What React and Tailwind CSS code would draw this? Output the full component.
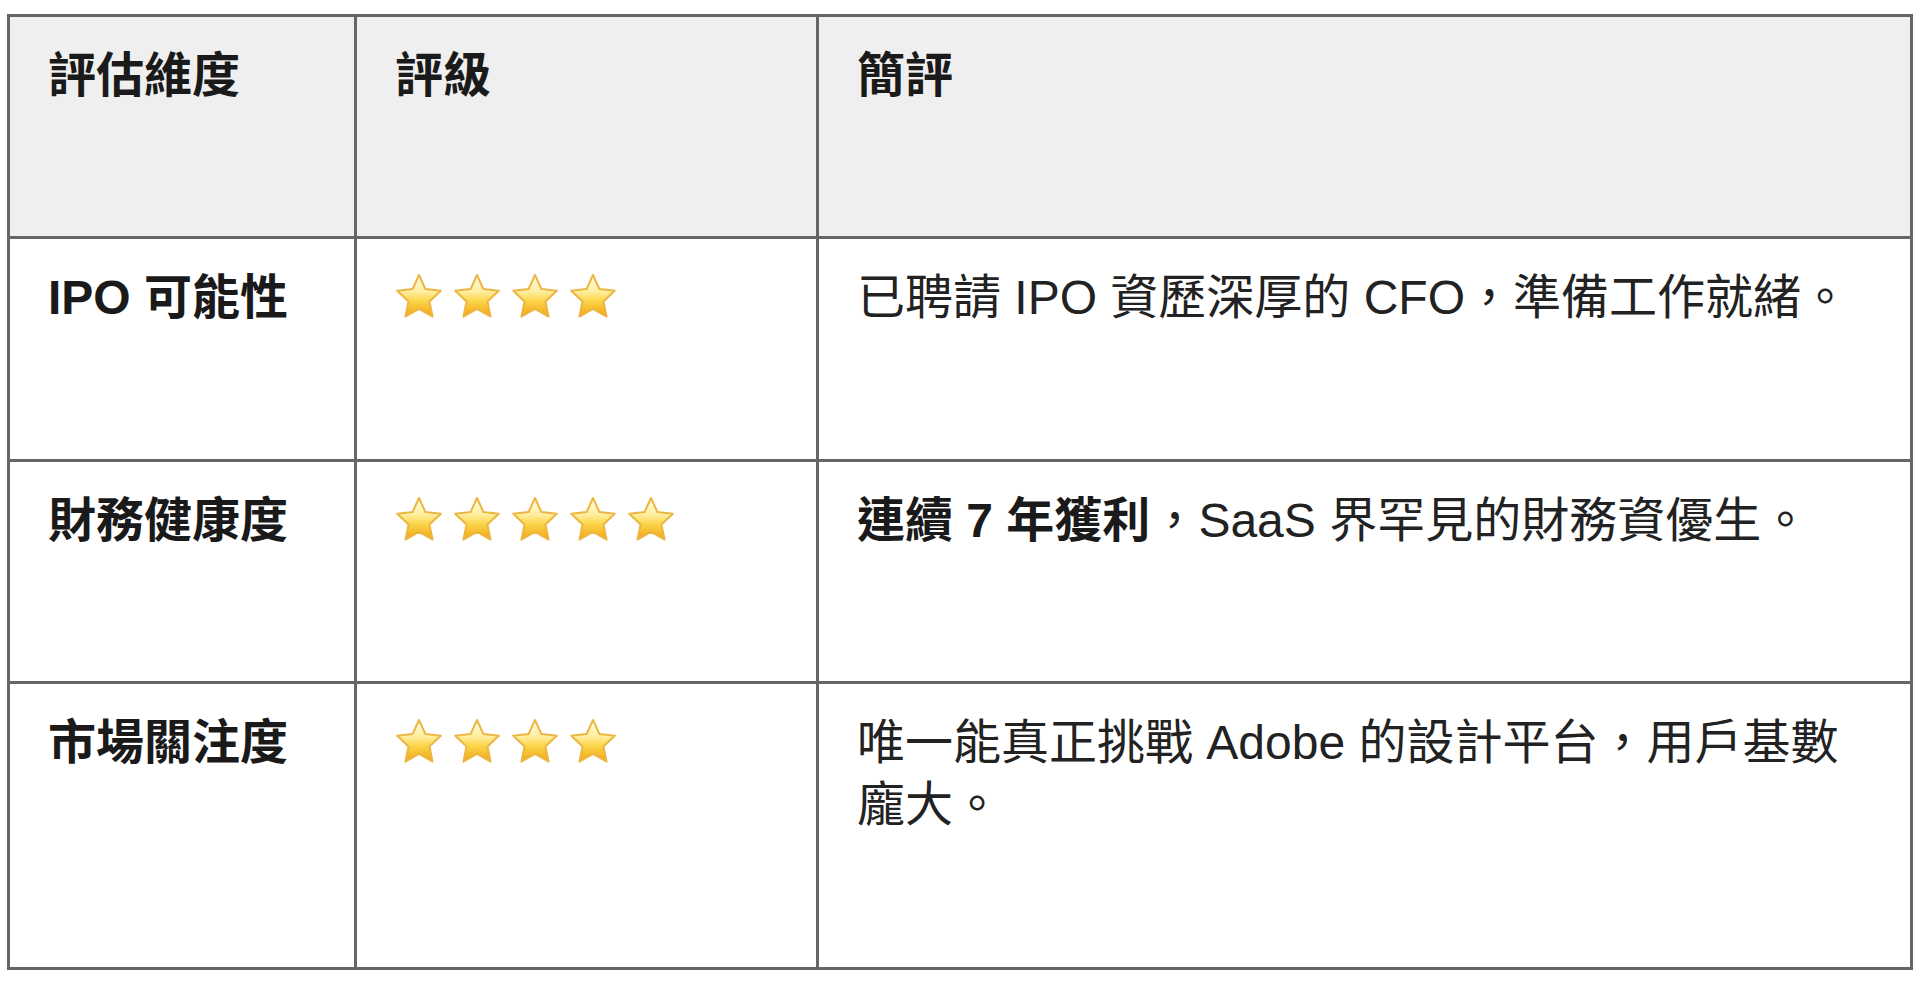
import React from "react";

function Star() {
  return (
    <svg width="48" height="46" viewBox="0 0 48 46" className="block shrink-0">
      <defs>
        <linearGradient id="sg" x1="0" y1="0" x2="0" y2="1">
          <stop offset="0%" stopColor="#fffbe6" />
          <stop offset="40%" stopColor="#ffeea0" />
          <stop offset="62%" stopColor="#fbd54a" />
          <stop offset="100%" stopColor="#f2a516" />
        </linearGradient>
      </defs>
      <path
        d="M24 2 L30.47 16.1 L45.8 17.8 L34.46 28.4 L37.6 43.6 L24 36 L10.4 43.6 L13.54 28.4 L2.2 17.8 L17.53 16.1 Z"
        fill="url(#sg)"
        stroke="#ecb642"
        strokeWidth="2"
        strokeLinejoin="round"
      />
    </svg>
  );
}

function Stars({ n }) {
  const arr = Array.from({ length: n });
  return (
    <div className="flex gap-[10px] pt-[6px]">
      {arr.map((_, i) => (
        <Star key={i} />
      ))}
    </div>
  );
}

const cell =
  "border-b-[3px] border-r-[3px] border-[#666666] pl-[38px] pr-[40px] pt-[28px]";
const cellLastCol = "border-b-[3px] border-[#666666] pl-[38px] pr-[40px] pt-[28px]";

export default function App() {
  return (
    <div className="min-h-[986px] w-full bg-white pl-[7px] pt-[14px] font-['Liberation_Sans','Noto_Sans_CJK_TC',sans-serif] text-[48px] leading-[62px] text-[#222222]">
      <div className="grid w-[1906px] grid-cols-[347px_462px_1091px] grid-rows-[222px_223px_222px_283px] border-[3px] border-[#666666]">
        {/* header */}
        <div className={`${cell} bg-[#efefef] font-bold text-[#1a1a1a]`}>評估維度</div>
        <div className={`${cell} bg-[#efefef] font-bold text-[#1a1a1a]`}>評級</div>
        <div className={`${cellLastCol} bg-[#efefef] font-bold text-[#1a1a1a]`}>簡評</div>

        {/* row 1 */}
        <div className={`${cell} font-bold text-[#1a1a1a]`}>IPO 可能性</div>
        <div className={cell}>
          <Stars n={4} />
        </div>
        <div className={`${cellLastCol} whitespace-nowrap`}>
          已聘請 IPO 資歷深厚的 CFO，準備工作就緒。
        </div>

        {/* row 2 */}
        <div className={`${cell} font-bold text-[#1a1a1a]`}>財務健康度</div>
        <div className={cell}>
          <Stars n={5} />
        </div>
        <div className={`${cellLastCol} whitespace-nowrap`}>
          <span className="font-bold text-[#1a1a1a]">連續 7 年獲利</span>，SaaS 界罕見的財務資優生。
        </div>

        {/* row 3 */}
        <div className="border-r-[3px] border-[#666666] pl-[38px] pr-[40px] pt-[28px] font-bold text-[#1a1a1a]">
          市場關注度
        </div>
        <div className="border-r-[3px] border-[#666666] pl-[38px] pr-[40px] pt-[28px]">
          <Stars n={4} />
        </div>
        <div className="pl-[38px] pr-[40px] pt-[28px]">
          唯一能真正挑戰 Adobe 的設計平台，用戶基數
          <br />
          龐大。
        </div>
      </div>
    </div>
  );
}
